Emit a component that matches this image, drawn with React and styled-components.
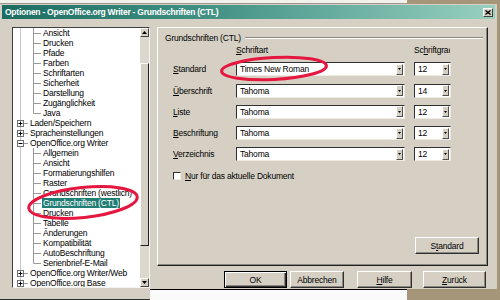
import React from 'react';
import styled, { createGlobalStyle } from 'styled-components';

const BEIGE = '#d6d0c4';
const TAN = '#a69679';

const Global = createGlobalStyle`
  html, body { margin: 0; padding: 0; }
  body { width: 500px; height: 300px; overflow: hidden; background: ${TAN}; }
`;

const Page = styled.div`
  position: relative;
  width: 500px;
  height: 300px;
  overflow: hidden;
  background: ${TAN};
  display: flex;
  flex-direction: column;
  font-family: "Liberation Sans", Arial, sans-serif;
  font-size: 8.5px;
  letter-spacing: -0.2px;
  color: #000;
`;

const Strip = styled.div`
  display: flex;
  flex: none;
  height: ${p => p.$h}px;
`;

const Band = styled.div`
  flex: ${p => (p.$w ? 'none' : '1')};
  width: ${p => (p.$w ? `${p.$w}px` : 'auto')};
  background: ${p => p.$bg};
  border-top: ${p => (p.$top ? `1px solid ${p.$top}` : 'none')};
  border-bottom: ${p => (p.$bottom ? `1px solid ${p.$bottom}` : 'none')};
`;

const Window = styled.div`
  flex: none;
  width: 497px;
  height: 285px;
  background: ${BEIGE};
  display: flex;
  flex-direction: column;
  box-sizing: border-box;
`;

const TitleBar = styled.div`
  height: 14px;
  margin: 1px 2px 0 2px;
  display: flex;
  align-items: center;
  background: linear-gradient(to right, #1c6c62 0%, #3f8f83 40%, #72b5a6 75%, #98d0c0 100%);
  padding-left: 3px;
  padding-right: 2px;
`;

const TitleText = styled.div`
  flex: 1;
  color: #fff;
  font-weight: bold;
  font-size: 8.5px;
  letter-spacing: -0.25px;
  white-space: nowrap;
`;

const CloseBtn = styled.div`
  width: 10px;
  height: 9px;
  box-sizing: border-box;
  background: ${BEIGE};
  border: 1px solid;
  border-color: #fff #404040 #404040 #fff;
  display: flex;
  align-items: center;
  justify-content: center;
`;

const Body = styled.div`
  display: flex;
  padding: 8px 0 0 12px;
  flex: 1;
  min-height: 0;
`;

const TreePanel = styled.div`
  width: 138px;
  height: 261px;
  box-sizing: border-box;
  display: flex;
  background: #fff;
  border: 1px solid;
  border-color: #404040 #f4f2ee #f4f2ee #404040;
`;

const TreeList = styled.div`
  flex: 1;
  overflow: hidden;
  display: flex;
  flex-direction: column;
`;

const Row = styled.div`
  display: flex;
  align-items: center;
  height: 10px;
  flex: none;
  white-space: nowrap;
`;

const Label = styled.span`
  padding: 0 1px;
  line-height: 10px;
  background: ${p => (p.$sel ? '#1f7d74' : 'transparent')};
  color: ${p => (p.$sel ? '#fff' : '#000')};
`;

const ScrollBar = styled.div`
  width: 9px;
  display: flex;
  flex-direction: column;
  background: ${BEIGE};
`;

const ScrollBtn = styled.div`
  height: 9px;
  flex: none;
  box-sizing: border-box;
  border: 1px solid;
  border-color: #fff #404040 #404040 #fff;
  display: flex;
  align-items: center;
  justify-content: center;
`;

const Track = styled.div`
  flex: 1;
  display: flex;
  flex-direction: column;
  background: #ddd8ce;
`;

const Thumb = styled.div`
  margin-top: 26px;
  height: 183px;
  box-sizing: border-box;
  background: ${BEIGE};
  border: 1px solid;
  border-color: #fff #202020 #202020 #fff;
`;

const RightCol = styled.div`
  width: 331px;
  margin-left: 7px;
  display: flex;
  flex-direction: column;
`;

const TabPage = styled.div`
  height: 239px;
  box-sizing: border-box;
  border: 1px solid;
  border-color: #fff #202020 #202020 #fff;
  box-shadow: inset -1px -1px #8a8680;
  display: flex;
  flex-direction: column;
  padding: 5px 0 0 0;
`;

const GroupHead = styled.div`
  display: flex;
  align-items: center;
  height: 10px;
  padding-left: 7px;
  margin-right: 4px;
  margin-bottom: 3px;
`;

const GroupLine = styled.div`
  flex: 1;
  margin-left: 4px;
  border-top: 1px solid #8a8680;
  border-bottom: 1px solid #fff;
`;

const FormGrid = styled.div`
  display: grid;
  grid-template-columns: 54px 169px 37px;
  grid-template-rows: 9px repeat(5, 14px);
  column-gap: 9px;
  row-gap: 7.3px;
  padding-left: 15px;
  align-items: center;
`;

const ColHead = styled.div`
  grid-column: ${p => p.$col};
  overflow: hidden;
  white-space: nowrap;
  line-height: 9px;
  width: ${p => (p.$clip ? '36px' : 'auto')};
`;

const FieldLabel = styled.div`
  white-space: nowrap;
`;

const Combo = styled.div`
  height: 14px;
  box-sizing: border-box;
  display: flex;
  align-items: center;
  background: #fff;
  border: 1px solid;
  border-color: #303030 #eeeae2 #eeeae2 #303030;
`;

const ComboText = styled.div`
  flex: 1;
  padding-left: 3px;
  white-space: nowrap;
  overflow: hidden;
`;

const DropBtn = styled.div`
  width: 7px;
  height: 11px;
  margin-right: 1px;
  box-sizing: border-box;
  background: ${BEIGE};
  border: 1px solid;
  border-color: #fff #505050 #505050 #fff;
  display: flex;
  align-items: center;
  justify-content: center;
`;

const CheckRow = styled.div`
  display: flex;
  align-items: center;
  margin-top: 10px;
  padding-left: 15px;
`;

const CheckBox = styled.div`
  width: 8px;
  height: 8px;
  box-sizing: border-box;
  background: #fff;
  border: 1px solid;
  border-color: #303030 #eeeae2 #eeeae2 #303030;
  margin-right: 4px;
`;

const Btn = styled.div`
  height: 17px;
  width: ${p => p.$w}px;
  margin-left: ${p => p.$ml || 0}px;
  box-sizing: border-box;
  background: ${BEIGE};
  display: flex;
  align-items: center;
  justify-content: center;
  border: 1px solid;
  border-color: ${p => (p.$def ? '#000' : '#fff #303030 #303030 #fff')};
  box-shadow: ${p =>
    p.$def
      ? 'inset 1px 1px #fff, inset -1px -1px #303030, inset -2px -2px #8a8680'
      : 'inset -1px -1px #8a8680'};
  white-space: nowrap;
`;

const StdBtnWrap = styled.div`
  margin-top: auto;
  align-self: flex-end;
  margin-right: 8px;
  margin-bottom: 11px;
`;

const ButtonRow = styled.div`
  display: flex;
  justify-content: flex-end;
  margin-top: 5px;
  padding-right: 2px;
`;

const U = styled.span`
  text-decoration: underline;
  text-underline-offset: 1px;
`;

const Overlay = styled.svg`
  position: absolute;
  left: 0;
  top: 0;
  pointer-events: none;
`;

const tree = [
  { t: 'Ansicht', l: 2 },
  { t: 'Drucken', l: 2 },
  { t: 'Pfade', l: 2 },
  { t: 'Farben', l: 2 },
  { t: 'Schriftarten', l: 2 },
  { t: 'Sicherheit', l: 2 },
  { t: 'Darstellung', l: 2 },
  { t: 'Zugänglichkeit', l: 2 },
  { t: 'Java', l: 2, last: true },
  { t: 'Laden/Speichern', l: 1, box: '+' },
  { t: 'Spracheinstellungen', l: 1, box: '+' },
  { t: 'OpenOffice.org Writer', l: 1, box: '-' },
  { t: 'Allgemein', l: 2 },
  { t: 'Ansicht', l: 2 },
  { t: 'Formatierungshilfen', l: 2 },
  { t: 'Raster', l: 2 },
  { t: 'Grundschriften (westlich)', l: 2 },
  { t: 'Grundschriften (CTL)', l: 2, sel: true },
  { t: 'Drucken', l: 2 },
  { t: 'Tabelle', l: 2 },
  { t: 'Änderungen', l: 2 },
  { t: 'Kompatibilität', l: 2 },
  { t: 'AutoBeschriftung', l: 2 },
  { t: 'Serienbrief-E-Mail', l: 2, last: true },
  { t: 'OpenOffice.org Writer/Web', l: 1, box: '+' },
  { t: 'OpenOffice.org Base', l: 1, box: '+' },
];

const LINE = '#9a9a9a';
const ROOTLINE = '#c8c8c8';

function Connector({ item }) {
  if (item.l === 2) {
    return (
      <svg width="29" height="10" style={{ flex: 'none', display: 'block' }}>
        <line x1="7.5" y1="0" x2="7.5" y2="10" stroke={ROOTLINE} strokeWidth="1" />
        <line x1="20.5" y1="0" x2="20.5" y2={item.last ? 5.5 : 10} stroke={LINE} strokeWidth="1" />
        <line x1="20.5" y1="5.5" x2="28" y2="5.5" stroke={LINE} strokeWidth="1" />
      </svg>
    );
  }
  return (
    <svg width="16" height="10" style={{ flex: 'none', display: 'block' }}>
      <line x1="7.5" y1="0" x2="7.5" y2="10" stroke={ROOTLINE} strokeWidth="1" />
      <rect x="4.5" y="2.5" width="6" height="6" fill="#fff" stroke="#707070" strokeWidth="1" />
      <line x1="5.5" y1="5.5" x2="9.5" y2="5.5" stroke="#000" strokeWidth="1" />
      {item.box === '+' && <line x1="7.5" y1="3.5" x2="7.5" y2="7.5" stroke="#000" strokeWidth="1" />}
      <line x1="11" y1="5.5" x2="15" y2="5.5" stroke={LINE} strokeWidth="1" />
    </svg>
  );
}

function Arrow({ dir }) {
  return (
    <svg width="5" height="3" style={{ display: 'block' }}>
      {dir === 'up' ? <polygon points="2.5,0 5,3 0,3" fill="#000" /> : <polygon points="0,0 5,0 2.5,3" fill="#000" />}
    </svg>
  );
}

function Drop() {
  return (
    <DropBtn>
      <svg width="3" height="2" style={{ display: 'block' }}>
        <polygon points="0,0 3,0 1.5,2" fill="#000" />
      </svg>
    </DropBtn>
  );
}

const rows = [
  { label: <><U>S</U>tandard</>, font: 'Times New Roman', size: '12' },
  { label: <><U>Ü</U>berschrift</>, font: 'Tahoma', size: '14' },
  { label: <><U>L</U>iste</>, font: 'Tahoma', size: '12' },
  { label: <><U>B</U>eschriftung</>, font: 'Tahoma', size: '12' },
  { label: <><U>V</U>erzeichnis</>, font: 'Tahoma', size: '12' },
];

export default function App() {
  return (
    <Page>
      <Global />
      <Strip $h={4}>
        <Band $w={407} $bg="#f3f1ec" $bottom="#9a968e" />
        <Band $bg={TAN} />
      </Strip>
      <Window>
        <TitleBar>
          <TitleText>Optionen - OpenOffice.org Writer - Grundschriften (CTL)</TitleText>
          <CloseBtn>
            <svg width="6" height="5" style={{ display: 'block' }}>
              <path d="M0.5 0.5 L5.5 4.5 M5.5 0.5 L0.5 4.5" stroke="#000" strokeWidth="1.4" />
            </svg>
          </CloseBtn>
        </TitleBar>
        <Body>
          <TreePanel>
            <TreeList>
              {tree.map((item, i) => (
                <Row key={i}>
                  <Connector item={item} />
                  <Label $sel={item.sel}>{item.t}</Label>
                </Row>
              ))}
            </TreeList>
            <ScrollBar>
              <ScrollBtn><Arrow dir="up" /></ScrollBtn>
              <Track><Thumb /></Track>
              <ScrollBtn><Arrow dir="down" /></ScrollBtn>
            </ScrollBar>
          </TreePanel>
          <RightCol>
            <TabPage>
              <GroupHead>
                <span>Grundschriften (CTL)</span>
                <GroupLine />
              </GroupHead>
              <FormGrid>
                <ColHead $col={2}><U>S</U>chriftart</ColHead>
                <ColHead $col={3} $clip>Sc<U>h</U>riftgrad</ColHead>
                {rows.map((r, i) => (
                  <React.Fragment key={i}>
                    <FieldLabel>{r.label}</FieldLabel>
                    <Combo>
                      <ComboText>{r.font}</ComboText>
                      <Drop />
                    </Combo>
                    <Combo>
                      <ComboText>{r.size}</ComboText>
                      <Drop />
                    </Combo>
                  </React.Fragment>
                ))}
              </FormGrid>
              <CheckRow>
                <CheckBox />
                <span><U>N</U>ur für das aktuelle Dokument</span>
              </CheckRow>
              <StdBtnWrap>
                <Btn $w={64}>S<U>t</U>andard</Btn>
              </StdBtnWrap>
            </TabPage>
            <ButtonRow>
              <Btn $w={63} $def>OK</Btn>
              <Btn $w={54} $ml={3}>Abbrechen</Btn>
              <Btn $w={55} $ml={13}><U>H</U>ilfe</Btn>
              <Btn $w={63} $ml={11}><U>Z</U>urück</Btn>
            </ButtonRow>
          </RightCol>
        </Body>
      </Window>
      <Strip $h={11}>
        <Band $w={150} $bg={BEIGE} $bottom="#303030" />
        <Band $w={257} $bg="#fafafa" $top="#000" />
        <Band $bg={TAN} />
      </Strip>
      <Overlay width="500" height="300">
        <ellipse cx="274" cy="68.5" rx="52.5" ry="11" transform="rotate(-3 274 68.5)" fill="none" stroke="#e5173f" strokeWidth="3" />
        <ellipse cx="83" cy="202.5" rx="54.5" ry="15" transform="rotate(-6 83 202.5)" fill="none" stroke="#e5173f" strokeWidth="3" />
      </Overlay>
    </Page>
  );
}
